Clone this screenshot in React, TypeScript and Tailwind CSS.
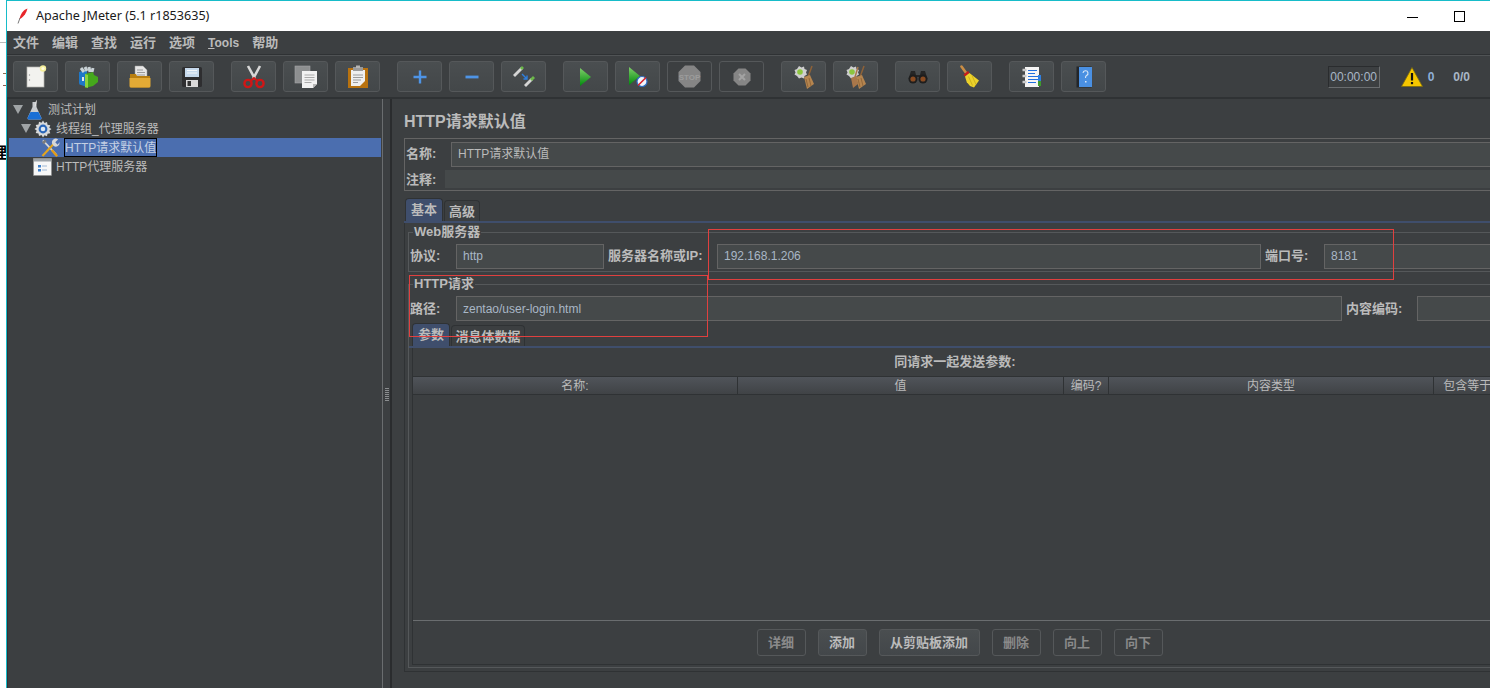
import type { ReactNode } from "react"

const font = "font-['Liberation_Sans','Noto_Sans_CJK_SC',sans-serif]"

function NewIcon() {
  return (
    <svg width="24" height="24" viewBox="0 0 24 24">
      <rect x="3" y="2" width="17" height="20" fill="#f2f2ef" stroke="#b5b5b0" strokeWidth="0.7" />
      <circle cx="5.5" cy="10" r="0.7" fill="#999" />
      <circle cx="5.5" cy="15" r="0.7" fill="#999" />
      <circle cx="19" cy="3.5" r="3.2" fill="#f4ee9a" />
      <circle cx="19" cy="3.5" r="1.6" fill="#fffde0" />
    </svg>
  )
}

function TemplatesIcon() {
  return (
    <svg width="24" height="24" viewBox="0 0 24 24">
      <path d="M3 7l8-2v17l-6-2a2 2 0 0 1-2-2z" fill="#1f78c8" />
      <path d="M5 3l3 4M9 2l2 4M13 2l1 5M17 3l-1 4" stroke="#c9d2d6" strokeWidth="3" />
      <path d="M9 9l8-2 1 3 4 2v5l-5 4-8 2z" fill="#45a81c" />
      <path d="M9 9l3 1v13l-3-1z" fill="#8bd13f" />
      <rect x="6" y="12" width="2" height="4" fill="#e6e6e6" />
    </svg>
  )
}

function OpenIcon() {
  return (
    <svg width="24" height="24" viewBox="0 0 24 24">
      <path d="M7 1h8l4 4v8H7z" fill="#e6e6e6" stroke="#9a9a9a" strokeWidth="0.5" />
      <path d="M9 5h6M9 7.5h8M9 10h8" stroke="#9a9a9a" />
      <path d="M2 9h6l1 2h13v10a1.500 1.500 0 0 1-1.500 1.500h-17A1.500 1.500 0 0 1 2 21z" fill="#b97f10" />
      <path d="M1.500 13h21v8a1.500 1.500 0 0 1-1.500 1.500H3A1.500 1.500 0 0 1 1.500 21z" fill="#e3aa35" />
    </svg>
  )
}

function SaveIcon() {
  return (
    <svg width="24" height="24" viewBox="0 0 24 24">
      <rect x="2" y="2" width="20" height="20" rx="1.500" fill="#2e2e30" />
      <rect x="5" y="3" width="14" height="9" fill="#c6d9ec" />
      <path d="M7 5.500h10M7 8h10" stroke="#f3f7fb" />
      <rect x="6" y="15" width="12" height="7" fill="#d9d9d9" />
      <rect x="7.500" y="16" width="3.500" height="5" fill="#333" />
    </svg>
  )
}

function CutIcon() {
  return (
    <svg width="24" height="24" viewBox="0 0 24 24">
      <path d="M6 1l7 13M18 1l-7 13" stroke="#d8d8d8" strokeWidth="2.600" />
      <circle cx="6" cy="18.500" r="3.600" fill="none" stroke="#d01616" strokeWidth="2.400" />
      <circle cx="18" cy="18.500" r="3.600" fill="none" stroke="#d01616" strokeWidth="2.400" />
      <path d="M8.500 16l3.500-3 3.500 3" fill="none" stroke="#d01616" strokeWidth="2" />
    </svg>
  )
}

function CopyIcon() {
  return (
    <svg width="24" height="24" viewBox="0 0 24 24">
      <rect x="1" y="1" width="15" height="17" fill="#8d8f90" stroke="#a4a6a7" strokeWidth="0.6" />
      <path d="M8 6h15v13l-4 4H8z" fill="#f1f1f1" />
      <path d="M10.500 10h10M10.500 12.500h10M10.500 15h10M10.500 17.500h7" stroke="#a9a9a9" />
      <path d="M19 23v-4h4z" fill="#b5b5b5" />
    </svg>
  )
}

function PasteIcon() {
  return (
    <svg width="24" height="24" viewBox="0 0 24 24">
      <rect x="2" y="3" width="20" height="20" fill="#b8720f" />
      <path d="M5 5h14v11l-5 5H5z" fill="#efefef" />
      <path d="M7 10h10M7 12.500h10M7 15h8M7 17.500h5" stroke="#9b9b9b" />
      <rect x="7" y="2" width="10" height="4" fill="#9a9a9a" />
      <rect x="10" y="0.500" width="4" height="2.500" fill="#b5b5b5" />
    </svg>
  )
}

function PlusIcon() {
  return (
    <svg width="16" height="16" viewBox="0 0 16 16">
      <path d="M1.500 8h13M8 1.500v13" stroke="#4e94e6" strokeWidth="2.400" />
    </svg>
  )
}

function MinusIcon() {
  return (
    <svg width="16" height="16" viewBox="0 0 16 16">
      <path d="M1.500 8h13" stroke="#4e94e6" strokeWidth="2.800" />
    </svg>
  )
}

function ToggleIcon() {
  return (
    <svg width="24" height="24" viewBox="0 0 24 24">
      <path d="M2 11l8-8" stroke="#d5d5d5" strokeWidth="2.800" />
      <path d="M9 4l2-2" stroke="#6cb84a" strokeWidth="2.800" />
      <path d="M13 21l7-7" stroke="#d5d5d5" strokeWidth="2.800" />
      <path d="M19 15l3-3" stroke="#6cb84a" strokeWidth="2.800" />
      <path d="M10 9l5 5M15 10.500V14h-3.500" fill="none" stroke="#2f7fe0" strokeWidth="1.400" />
    </svg>
  )
}

function RunIcon() {
  return (
    <svg width="13" height="20" viewBox="0 0 13 20">
      <defs>
        <linearGradient id="run" x1="0" y1="0" x2="0" y2="1">
          <stop offset="0" stopColor="#7fce6a" />
          <stop offset="1" stopColor="#008a0c" />
        </linearGradient>
      </defs>
      <path d="M1 1l11 9-11 9z" fill="url(#run)" />
    </svg>
  )
}

function RunNoPauseIcon() {
  return (
    <svg width="20" height="22" viewBox="0 0 20 22">
      <path d="M1 1l11 9-11 9z" fill="url(#run)" />
      <circle cx="14" cy="15.500" r="5" fill="#f1f5fb" stroke="#2e6dc4" strokeWidth="1.200" />
      <path d="M10 19.500l8-8" stroke="#d9222a" strokeWidth="1.600" />
    </svg>
  )
}

function StopIcon() {
  return (
    <svg width="23" height="23" viewBox="0 0 23 23">
      <path d="M7 0.500h9l6.500 6.500v9L16 22.500H7L0.500 16V7z" fill="#858585" />
      <text x="11.500" y="15" textAnchor="middle" fontSize="8" fontWeight="700" fill="#9c9c9c" fontFamily="Liberation Sans">STOP</text>
    </svg>
  )
}

function ShutdownIcon() {
  return (
    <svg width="18" height="18" viewBox="0 0 18 18">
      <path d="M5.500 0.500h7l5 5v7l-5 5h-7l-5-5v-7z" fill="#858585" />
      <path d="M6 6l6 6M12 6l-6 6" stroke="#a3a3a3" strokeWidth="2" />
    </svg>
  )
}

function ClearIcon({ all }: { all?: boolean }) {
  return (
    <svg width="26" height="26" viewBox="0 0 26 26">
      <path d="M8 2l2.500 1.500 2.500-1 .5 2.500 2.500 1-1 2.500 1 2-2.500 1.500-.5 2.500-2.500-1-2.500 1L6 12l-2.500-1.500 1-2-1-2.500L6 5z" fill="#cfcfcf" />
      <circle cx="9" cy="8" r="2.800" fill="#8cc63f" />
      {all && <path d="M15 3l-3 10" stroke="#a9774a" strokeWidth="1.500" />}
      {all && <path d="M8 14l5-2 2 8-5 4z" fill="#a9774a" />}
      <path d="M21 2l-4 11" stroke="#8f6238" strokeWidth="1.500" />
      <path d="M13 13l6-2 4 9-7 5z" fill="#b5854f" />
      <path d="M15 15l2 8M18 14l2 8" stroke="#8a6035" strokeWidth="0.800" />
    </svg>
  )
}

function SearchIcon() {
  return (
    <svg width="20" height="15" viewBox="0 0 20 15">
      <path d="M3 2h4l1 4h4l1-4h4l2.500 8h-7.500l-.5-2h-3l-.5 2H.5z" fill="#262626" />
      <circle cx="5" cy="10" r="4.500" fill="#1e1e1e" />
      <circle cx="15" cy="10" r="4.500" fill="#1e1e1e" />
      <circle cx="5" cy="10" r="2.600" fill="#8a4b21" />
      <circle cx="15" cy="10" r="2.600" fill="#8a4b21" />
    </svg>
  )
}

function BroomIcon() {
  return (
    <svg width="20" height="23" viewBox="0 0 20 23">
      <path d="M1.500 1.500l5 7" stroke="#c98d45" strokeWidth="2.600" strokeLinecap="round" />
      <path d="M3.500 9.500l4.500-3.500 1.500 2-4.500 3.500z" fill="#c71b1b" />
      <path d="M5 11.500l4.500-3.500 9.500 7.500-5 7-4-1.500-2.500-3-.5 0z" fill="#ecd22a" />
      <path d="M8.500 11.500l4 9M12 10.500l4 9" stroke="#b89c14" strokeWidth="0.600" />
    </svg>
  )
}

function FunctionIcon() {
  return (
    <svg width="20" height="22" viewBox="0 0 20 22">
      <rect x="3" y="1" width="14" height="20" fill="#f5f5f5" />
      <rect x="16" y="9" width="3" height="6" fill="#2f7fe0" />
      <rect x="16" y="15" width="3" height="5" fill="#3e9a2e" />
      <path d="M6 4.500h9M6 7.500h7M6 10.500h10M6 13.500h10M6 16.500h8" stroke="#1f6fe0" strokeWidth="1.100" />
      <path d="M0.500 4h4M0.500 10h4M0.500 16h4" stroke="#c9c9c9" strokeWidth="2.400" />
    </svg>
  )
}

function HelpIcon() {
  return (
    <svg width="16" height="22" viewBox="0 0 16 22">
      <rect x="0.500" y="0.500" width="15" height="21" fill="#23262a" />
      <rect x="3" y="1" width="13" height="20" fill="#4a90e2" />
      <path d="M7 7a2.500 2.500 0 1 1 3.500 2.500c-1 .5-1 1.500-1 2.500" fill="none" stroke="#d9e8f8" strokeWidth="1.100" />
      <rect x="9" y="15" width="1.500" height="1.500" fill="#d9e8f8" />
    </svg>
  )
}

function WarnIcon() {
  return (
    <svg width="22" height="20" viewBox="0 0 22 20">
      <path d="M11 0.500l10.500 19H0.500z" fill="#f6c700" stroke="#7a6a10" strokeWidth="0.800" />
      <path d="M11 6v7.500" stroke="#111" strokeWidth="2.200" />
      <rect x="9.900" y="15" width="2.200" height="2.200" fill="#111" />
    </svg>
  )
}

function FlaskIcon() {
  return (
    <svg width="15" height="20" viewBox="0 0 15 20">
      <path d="M5.500 2h4v5l5 11a1.500 1.500 0 0 1-1.500 1.500H2A1.500 1.500 0 0 1 .5 18l5-11z" fill="#c9ccd0" />
      <path d="M3.500 12h8l3 6a1.500 1.500 0 0 1-1.500 1.500H2A1.500 1.500 0 0 1 .5 18z" fill="#1a6fd6" />
      <path d="M9.500 0.500l-1.500 6" stroke="#e2e2e2" />
    </svg>
  )
}

function GearIcon() {
  return (
    <svg width="18" height="18" viewBox="0 0 18 18">
      <path d="M9 0.500l1.500 2.500 2.500-1 .5 2.800 2.800.5-1 2.500 2.200 1.200-2.200 1.700 1 2.500-2.800.5-.5 2.500-2.500-1L9 17.500 7.500 15l-2.500 1-.5-2.500-2.800-.5 1-2.500L.5 9l2.200-1.500-1-2.500 2.800-.5.500-2.800 2.500 1z" fill="#d6d8da" />
      <circle cx="9" cy="9" r="4.400" fill="#2a66b8" />
      <circle cx="9" cy="9" r="2.300" fill="#dce8f5" />
    </svg>
  )
}

function ToolsIcon() {
  return (
    <svg width="20" height="20" viewBox="0 0 20 20">
      <path d="M2 2l14 15" stroke="#d8d8d8" strokeWidth="1.800" />
      <path d="M1 4l3-3 2 2-3 3z" fill="#7c7c7c" />
      <path d="M12 11l6 7-2 1.500-5.500-6.500z" fill="#e39c16" />
      <path d="M1.500 18.500L13 6" stroke="#e3a51e" strokeWidth="2.200" />
      <path d="M12 6a4 4 0 0 1 6-5l-3 3 2.500 2.500 2-2.500a4 4 0 0 1-6 4z" fill="#d8d8d8" />
    </svg>
  )
}

function ProxyIcon() {
  return (
    <svg width="19" height="18" viewBox="0 0 19 18">
      <rect x="0.500" y="0.500" width="18" height="17" fill="#f7f7f7" stroke="#8c8c8c" strokeWidth="0.600" />
      <rect x="1" y="1" width="17" height="2.500" fill="#9ba2a8" />
      <rect x="5" y="7" width="3" height="2.500" fill="#3f7fc8" />
      <rect x="5" y="11" width="3" height="2.500" fill="#3f7fc8" />
      <path d="M9 8h5M9 12h5" stroke="#9db7d5" />
    </svg>
  )
}

function TitleIcon() {
  return (
    <svg width="11" height="16" viewBox="0 0 11 16">
      <path d="M10.500 0.500C6 2 3.500 6 2.500 11l2-1C7 8 9.500 5 10.500 0.500z" fill="#e8262a" />
      <path d="M3 10L1 15.500" stroke="#555" strokeWidth="0.800" />
    </svg>
  )
}

function ToolBtn({ children, disabled }: { children: ReactNode; disabled?: boolean }) {
  return (
    <button
      className={`flex h-[31px] w-[45px] shrink-0 items-center justify-center rounded-[3px] border border-[#55585a] ${
        disabled ? "bg-[#3c3f41]" : "bg-gradient-to-b from-[#4a4e50] to-[#434749]"
      }`}
    >
      {children}
    </button>
  )
}

function Field({ className = "", value }: { className?: string; value?: string }) {
  return (
    <div className={`flex h-[25px] items-center border border-[#646464] bg-[#45494a] pl-[6px] text-[12px] text-[#a9b7c6] ${className}`}>
      {value}
    </div>
  )
}

function Label({ children, className = "" }: { children: ReactNode; className?: string }) {
  return <div className={`whitespace-nowrap text-[13px] font-bold text-[#bbbbbb] ${className}`}>{children}</div>
}

function Tab({ children, active, className = "" }: { children: ReactNode; active?: boolean; className?: string }) {
  return (
    <div
      className={`flex items-center justify-center rounded-t-[4px] border border-b-0 border-[#2f3234] text-[13px] font-bold text-[#bbbbbb] ${
        active ? "h-[23px] bg-[#3f4e6c] pb-px" : "h-[21px] bg-[#3c3f41] pt-px"
      } ${className}`}
    >
      {children}
    </div>
  )
}

function ActionBtn({ children, disabled, className = "w-[49px]" }: { children: ReactNode; disabled?: boolean; className?: string }) {
  return (
    <button
      className={`flex h-[27px] items-center justify-center rounded-[3px] border border-[#55585a] text-[13px] font-bold ${
        disabled ? "bg-[#3c3f41] text-[#8a8a8a]" : "bg-gradient-to-b from-[#4a4e50] to-[#43474a] text-[#bbbbbb]"
      } ${className}`}
    >
      {children}
    </button>
  )
}

function TreeRow({ pad, icon, label, arrow, selected }: { pad: string; icon: ReactNode; label: string; arrow?: boolean; selected?: boolean }) {
  return (
    <div className={`flex h-[19px] items-center ${pad} ${selected ? "bg-[#4b6eaf]" : ""}`}>
      {arrow && <div className="mr-[2px] h-0 w-0 border-x-[5px] border-t-[9px] border-x-transparent border-t-[#a0a4a6]" />}
      <div className="flex w-[19px] shrink-0 items-center justify-center">{icon}</div>
      <span
        className={`ml-[4px] whitespace-nowrap text-[12px] text-[#bbbbbb] ${
          selected ? "flex h-[19px] items-center border border-black px-0 text-[#c4d0e4]" : ""
        }`}
      >
        {label}
      </span>
    </div>
  )
}

const columns = [
  { label: "名称:", w: "w-[325px]" },
  { label: "值", w: "w-[326px]" },
  { label: "编码?", w: "w-[45px]" },
  { label: "内容类型", w: "w-[325px]" },
  { label: "包含等于?", w: "w-[74px]" },
]

export default function App() {
  return (
    <div className={`flex h-[688px] w-[1490px] overflow-hidden bg-white ${font}`}>
      {/* desktop peeking out on the left */}
      <div className="flex w-[6px] shrink-0 flex-col overflow-hidden">
        <div className="mt-[42px] h-px w-full shrink-0 bg-[#bbbbbb]" />
        <div className="mt-[30px] h-px w-[3px] shrink-0 self-end bg-[#8a6a50]" />
        <div className="mt-[11px] h-px w-[3px] shrink-0 self-end bg-[#8a5a50]" />
        <div className="mt-[59px] w-[6px] overflow-hidden text-[15px] font-bold leading-none text-black">
          <span className="-ml-[8px] block w-[15px]">理</span>
        </div>
      </div>

      <div className="flex min-w-0 flex-1 flex-col border-l border-[#17bcc9]">
        {/* title bar */}
        <div className="flex h-[31px] shrink-0 items-center border-t border-[#17bcc9] bg-white">
          <div className="ml-[10px]">
            <TitleIcon />
          </div>
          <span className="ml-[8px] font-['Noto_Sans'] text-[12.6px] text-[#1a1a1a]">Apache JMeter (5.1 r1853635)</span>
          <div className="ml-auto mr-[36px] mt-[2px] h-px w-[11px] bg-black" />
          <div className="mr-[25px] h-[11px] w-[11px] border border-black" />
        </div>

        {/* menu */}
        <div className="flex h-[24px] shrink-0 items-center gap-[13px] border-b border-[#2f3234] bg-[#3c3f41] pl-[6px] text-[13px] font-bold text-[#bbbbbb]">
          <span>文件</span>
          <span>编辑</span>
          <span>查找</span>
          <span>运行</span>
          <span>选项</span>
          <span className="text-[12px]">
            <span className="underline">T</span>ools
          </span>
          <span>帮助</span>
        </div>

        {/* toolbar */}
        <div className="flex h-[44px] shrink-0 items-center border-t border-[#505355] border-b-2 border-b-[#2f3234] bg-[#3c3f41] pl-[6px]">
          <div className="flex gap-[7px]">
            <ToolBtn><NewIcon /></ToolBtn>
            <ToolBtn><TemplatesIcon /></ToolBtn>
            <ToolBtn><OpenIcon /></ToolBtn>
            <ToolBtn><SaveIcon /></ToolBtn>
          </div>
          <div className="ml-[17px] flex gap-[7px]">
            <ToolBtn><CutIcon /></ToolBtn>
            <ToolBtn><CopyIcon /></ToolBtn>
            <ToolBtn><PasteIcon /></ToolBtn>
          </div>
          <div className="ml-[17px] flex gap-[7px]">
            <ToolBtn><PlusIcon /></ToolBtn>
            <ToolBtn><MinusIcon /></ToolBtn>
            <ToolBtn><ToggleIcon /></ToolBtn>
          </div>
          <div className="ml-[17px] flex gap-[7px]">
            <ToolBtn><RunIcon /></ToolBtn>
            <ToolBtn><RunNoPauseIcon /></ToolBtn>
            <ToolBtn disabled><StopIcon /></ToolBtn>
            <ToolBtn disabled><ShutdownIcon /></ToolBtn>
          </div>
          <div className="ml-[17px] flex gap-[7px]">
            <ToolBtn><ClearIcon /></ToolBtn>
            <ToolBtn><ClearIcon all /></ToolBtn>
          </div>
          <div className="ml-[17px] flex gap-[7px]">
            <ToolBtn><SearchIcon /></ToolBtn>
            <ToolBtn><BroomIcon /></ToolBtn>
          </div>
          <div className="ml-[17px] flex gap-[7px]">
            <ToolBtn><FunctionIcon /></ToolBtn>
            <ToolBtn><HelpIcon /></ToolBtn>
          </div>
          <div className="ml-auto flex items-center pr-[20px] text-[12px] font-bold text-[#a9b7c6]">
            <div className="flex h-[22px] w-[52px] items-center justify-center border border-[#2a2c2e] border-b-[#6a6d6f] border-r-[#6a6d6f] bg-[#3c3f41] font-normal">
              00:00:00
            </div>
            <div className="ml-[21px]">
              <WarnIcon />
            </div>
            <span className="ml-[5px] text-[#8fb0d8]">0</span>
            <span className="ml-[19px]">0/0</span>
          </div>
        </div>

        {/* body */}
        <div className="relative flex min-h-0 flex-1 bg-[#3c3f41]">
          {/* tree */}
          <div className="flex w-[376px] shrink-0 flex-col border-x border-l-[#2f3234] border-r-[#6a6d6f] pl-px pr-px pt-px">
            <TreeRow pad="pl-[4px]" arrow icon={<FlaskIcon />} label="测试计划" />
            <TreeRow pad="pl-[12px]" arrow icon={<GearIcon />} label="线程组_代理服务器" />
            <TreeRow pad="pl-[32px]" selected icon={<ToolsIcon />} label="HTTP请求默认值" />
            <TreeRow pad="pl-[24px]" icon={<ProxyIcon />} label="HTTP代理服务器" />
          </div>

          {/* splitter */}
          <div className="flex w-[9px] shrink-0 items-center justify-center border-r-2 border-[#2a2c2e]">
            <div className="h-[14px] w-[4px] bg-[repeating-linear-gradient(0deg,#8a8d8f_0,#8a8d8f_1px,transparent_1px,transparent_2px)]" />
          </div>

          {/* right panel */}
          <div className="flex w-[1120px] shrink-0 flex-col pl-[12px] pt-[11px]">
            <div className="h-[22px] shrink-0 text-[16px] font-bold leading-[24px] text-[#bbbbbb]">HTTP请求默认值</div>

            <div className="mt-[6px] flex h-[53px] shrink-0 flex-col border border-[#646464] pl-px">
              <div className="flex h-[28px] shrink-0 items-center pt-[2px]">
                <Label className="w-[45px]">名称:</Label>
                <Field className="flex-1 text-[#bbbbbb]" value="HTTP请求默认值" />
              </div>
              <div className="mt-[3px] flex h-[18px] shrink-0 items-center">
                <Label className="w-[39px] pt-[2px]">注释:</Label>
                <div className="h-[18px] flex-1 bg-[#45494a]" />
              </div>
            </div>

            {/* tabs */}
            <div className="mt-[7px] flex shrink-0 items-end gap-px pl-px">
              <Tab active className="w-[38px]">基本</Tab>
              <Tab className="w-[36px]">高级</Tab>
            </div>
            <div className="h-[2px] shrink-0 bg-[#3f4e6c]" />

            <div className="flex shrink-0 flex-col border-b border-l border-[#2f3234] px-[3px]">
              {/* web server */}
              <div className="relative mt-[9px] flex h-[40px] shrink-0 items-center gap-[4px] border-y border-l border-[#55585a] pl-px pt-[8px]">
                <span className="absolute -top-[9px] left-[4px] bg-[#3c3f41] px-px text-[13px] font-bold leading-[16px] text-[#bbbbbb]">Web服务器</span>
                <Label className="w-[42px]">协议:</Label>
                <Field className="w-[148px]" value="http" />
                <Label className="w-[105px]">服务器名称或IP:</Label>
                <Field className="w-[544px]" value="192.168.1.206" />
                <Label className="w-[55px]">端口号:</Label>
                <Field className="flex-1" value="8181" />
              </div>

              {/* http request */}
              <div className="relative mt-[12px] flex shrink-0 flex-col border-b border-l border-t border-[#55585a] pt-[11px]">
                <span className="absolute -top-[9px] left-[4px] bg-[#3c3f41] px-px text-[13px] font-bold leading-[16px] text-[#bbbbbb]">HTTP请求</span>
                <div className="flex items-center gap-[4px] pl-px">
                  <Label className="w-[42px]">路径:</Label>
                  <Field className="w-[886px]" value="zentao/user-login.html" />
                  <Label className="w-[67px]">内容编码:</Label>
                  <Field className="flex-1" />
                </div>

                <div className="mt-[2px] flex items-end gap-px pl-[3px]">
                  <Tab active className="w-[38px]">参数</Tab>
                  <Tab className="w-[74px]">消息体数据</Tab>
                </div>
                <div className="h-[2px] bg-[#3f4e6c]" />

                <div className="ml-[3px] mb-[2px] flex flex-col border-b border-l border-[#2f3234]">
                  <div className="flex h-[273px] flex-col">
                    <div className="flex h-[28px] shrink-0 items-center justify-center pr-[12px] text-[13px] font-bold text-[#bbbbbb]">同请求一起发送参数:</div>
                    <div className="flex h-[18px] shrink-0 border-t border-[#2f3234] bg-gradient-to-b from-[#50545a] to-[#404346] text-[12px] text-[#bbbbbb]">
                      {columns.map(c => (
                        <div key={c.label} className={`flex items-center justify-center whitespace-nowrap border-r border-[#2f3234] ${c.w}`}>
                          {c.label}
                        </div>
                      ))}
                    </div>
                    <div className="flex-1 border-t border-b border-[#2f3234] border-b-[#6a6d6f]" />
                  </div>

                  <div className="flex h-[43px] items-center justify-center gap-[12px] pr-[3px]">
                    <ActionBtn disabled>详细</ActionBtn>
                    <ActionBtn>添加</ActionBtn>
                    <ActionBtn className="w-[101px]">从剪贴板添加</ActionBtn>
                    <ActionBtn disabled>删除</ActionBtn>
                    <ActionBtn disabled>向上</ActionBtn>
                    <ActionBtn disabled>向下</ActionBtn>
                  </div>
                </div>
              </div>
              <div className="h-[3px] shrink-0" />
            </div>
          </div>

          {/* hand-drawn red boxes over the form */}
          <div className="pointer-events-none absolute left-[701px] top-[130px] h-[51px] w-[686px] border border-[#e0403f]" />
          <div className="pointer-events-none absolute left-[402px] top-[176px] h-[62px] w-[299px] border border-[#e0403f]" />
        </div>
      </div>
    </div>
  )
}
